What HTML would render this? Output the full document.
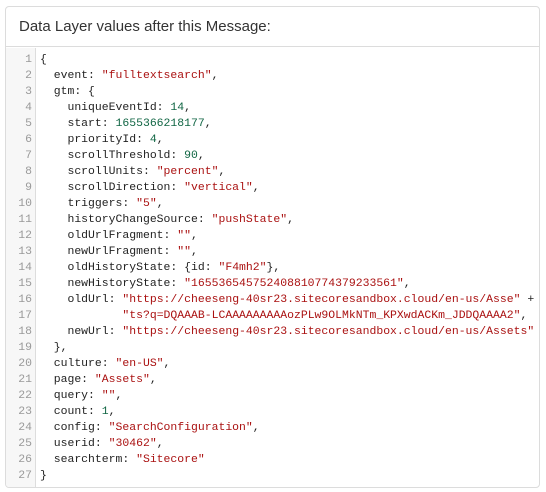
<!DOCTYPE html>
<html><head><meta charset="utf-8"><style>
html,body{margin:0;padding:0;background:#fff;width:546px;height:492px;overflow:hidden}
.card{position:absolute;left:5px;top:6px;width:533px;height:480px;border:1px solid #dcdcdc;border-radius:4px;overflow:hidden;background:#fff}
.hd{height:39px;border-bottom:1px solid #dcdcdc;font:15px "Liberation Sans",sans-serif;color:#333;padding-left:13px;line-height:40px}
.body{position:absolute;top:41px;left:0;right:0;bottom:0}
.gut{position:absolute;left:0;top:0;bottom:0;width:29px;background:#f7f7f7;border-right:1px solid #ddd}
pre{margin:0;font:11.45px/16px "Liberation Mono",monospace;color:#222;position:absolute;top:4px}
.nums{left:0;width:26px;text-align:right;color:#999}
.code{left:34px;white-space:pre}
.s{color:#a11}.n{color:#164}
</style></head><body>
<div class="card">
<div class="hd">Data Layer values after this Message:</div>
<div class="body">
<div class="gut"></div>
<pre class="nums">1
2
3
4
5
6
7
8
9
10
11
12
13
14
15
16
17
18
19
20
21
22
23
24
25
26
27</pre>
<pre class="code">{
  event: <span class="s">"fulltextsearch"</span>,
  gtm: {
    uniqueEventId: <span class="n">14</span>,
    start: <span class="n">1655366218177</span>,
    priorityId: <span class="n">4</span>,
    scrollThreshold: <span class="n">90</span>,
    scrollUnits: <span class="s">"percent"</span>,
    scrollDirection: <span class="s">"vertical"</span>,
    triggers: <span class="s">"5"</span>,
    historyChangeSource: <span class="s">"pushState"</span>,
    oldUrlFragment: <span class="s">""</span>,
    newUrlFragment: <span class="s">""</span>,
    oldHistoryState: {id: <span class="s">"F4mh2"</span>},
    newHistoryState: <span class="s">"165536545752408810774379233561"</span>,
    oldUrl: <span class="s">"https://cheeseng-40sr23.sitecoresandbox.cloud/en-us/Asse"</span> +
            <span class="s">"ts?q=DQAAAB-LCAAAAAAAAAozPLw9OLMkNTm_KPXwdACKm_JDDQAAAA2"</span>,
    newUrl: <span class="s">"https://cheeseng-40sr23.sitecoresandbox.cloud/en-us/Assets"</span>
  },
  culture: <span class="s">"en-US"</span>,
  page: <span class="s">"Assets"</span>,
  query: <span class="s">""</span>,
  count: <span class="n">1</span>,
  config: <span class="s">"SearchConfiguration"</span>,
  userid: <span class="s">"30462"</span>,
  searchterm: <span class="s">"Sitecore"</span>
}</pre>
</div>
</div>
</body></html>
